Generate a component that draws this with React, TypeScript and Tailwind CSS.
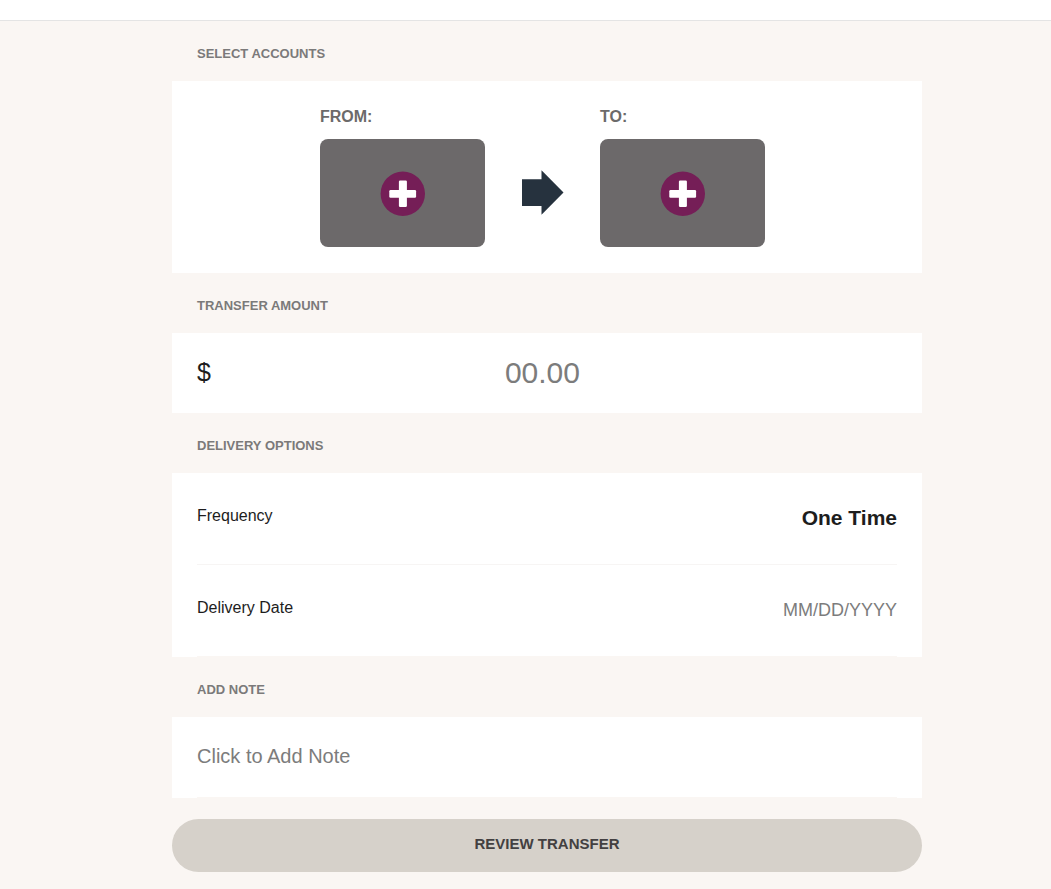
import { useState } from 'react';
import type { ReactNode } from 'react';

function Section({ title, children }: { title: string; children: ReactNode }) {
  return (
    <section>
      <h2 className="h-[60px] px-[25px] pt-1.5 flex items-center text-[13px] font-bold text-[#7b7a7a]">{title}</h2>
      <div className="bg-white">{children}</div>
    </section>
  );
}

function AccountPicker({ label }: { label: string }) {
  return (
    <div>
      <div className="mb-[10px] text-base font-bold text-[#6c6a6a]">{label}</div>
      <button
        type="button"
        aria-label={`Select account ${label}`}
        className="w-[165px] h-[108px] rounded-lg bg-[#6c696a] flex items-center justify-center"
      >
        <svg width="46" height="46" viewBox="0 0 46 46" aria-hidden="true">
          <circle cx="22.8" cy="23.7" r="22.2" fill="#751e57" />
          <rect x="9.3" y="20" width="26.8" height="7.8" rx="1.2" fill="#fff" />
          <rect x="18.9" y="10.5" width="8" height="26.5" rx="1.2" fill="#fff" />
        </svg>
      </button>
    </div>
  );
}

function App() {
  const [amount, setAmount] = useState('');
  const [frequency, setFrequency] = useState('One Time');
  const [date, setDate] = useState('');
  const [note, setNote] = useState('');

  return (
    <div className="min-h-screen bg-[#faf6f3] font-['Liberation_Sans',Arial,sans-serif] text-[#1d1d1d]">
      <header className="h-[21px] bg-white border-b border-[#e4e4e4]" />
      <main className="pl-[43px] pb-4">
        <form className="w-full max-w-[750px] mx-auto" onSubmit={(e) => e.preventDefault()}>
          <Section title="SELECT ACCOUNTS">
            <div className="pt-6 pb-[26px] pr-[9px] flex justify-center">
              <AccountPicker label="FROM:" />
              <div className="w-[115px] pt-[34px] flex items-center justify-center">
                <svg width="42" height="46" viewBox="0 0 42 46" aria-hidden="true">
                  <path d="M0 9.2h19.5V0.3L41.5 22.5 19.5 44.7V36H0z" fill="#26323e" />
                </svg>
              </div>
              <AccountPicker label="TO:" />
            </div>
          </Section>

          <Section title="TRANSFER AMOUNT">
            <div className="h-20 pl-[25px] pr-12 flex items-center">
              <label htmlFor="amount" className="text-[25px]">$</label>
              <input
                id="amount"
                type="text"
                inputMode="decimal"
                placeholder="00.00"
                value={amount}
                onChange={(e) => setAmount(e.target.value)}
                className="flex-1 min-w-0 pb-0.5 text-center text-[30px] outline-none placeholder:text-[#7c7c7c]"
              />
            </div>
          </Section>

          <Section title="DELIVERY OPTIONS">
            <div className="px-[25px]">
              <div className="h-[92px] pb-0.5 flex items-center justify-between border-b border-[#f7f5f4]">
                <label htmlFor="frequency" className="pb-1">Frequency</label>
                <select
                  id="frequency"
                  value={frequency}
                  onChange={(e) => setFrequency(e.target.value)}
                  className="appearance-none text-right text-[21px] font-bold outline-none"
                >
                  <option>One Time</option>
                  <option>Weekly</option>
                  <option>Monthly</option>
                </select>
              </div>
              <div className="h-[92px] pb-0.5 flex items-center justify-between border-b border-[#faf6f3]">
                <label htmlFor="date" className="pb-1">Delivery Date</label>
                <input
                  id="date"
                  type="text"
                  placeholder="MM/DD/YYYY"
                  value={date}
                  onChange={(e) => setDate(e.target.value)}
                  className="min-w-0 text-right text-lg outline-none placeholder:text-[#7c7c7c]"
                />
              </div>
            </div>
          </Section>

          <Section title="ADD NOTE">
            <div className="px-[25px]">
              <input
                type="text"
                aria-label="Add note"
                placeholder="Click to Add Note"
                value={note}
                onChange={(e) => setNote(e.target.value)}
                className="block w-full h-[81px] pb-0.5 text-xl outline-none border-b border-[#faf6f3] placeholder:text-[#7c7c7c]"
              />
            </div>
          </Section>

          <button
            type="submit"
            className="mt-[21px] w-full h-[53px] pb-0.5 rounded-full bg-[#d6d1ca] text-[15px] font-bold text-[#434041]"
          >
            REVIEW TRANSFER
          </button>
        </form>
      </main>
    </div>
  );
}

export default App;
